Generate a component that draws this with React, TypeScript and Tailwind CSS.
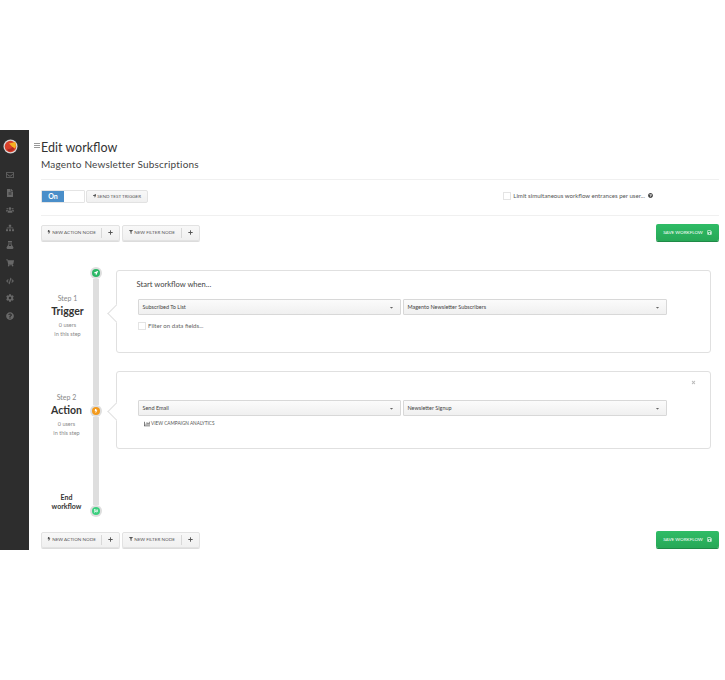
import {
  FaBolt,
  FaCaretDown,
  FaChartBar,
  FaCode,
  FaCog,
  FaFileAlt,
  FaFilter,
  FaFlagCheckered,
  FaFlask,
  FaLocationArrow,
  FaPlus,
  FaQuestionCircle,
  FaRegEnvelope,
  FaSave,
  FaShoppingCart,
  FaSitemap,
  FaTimes,
  FaUsers,
} from "react-icons/fa"
import type { ReactNode } from "react"

const navIcons = [
  FaRegEnvelope,
  FaFileAlt,
  FaUsers,
  FaSitemap,
  FaFlask,
  FaShoppingCart,
  FaCode,
  FaCog,
  FaQuestionCircle,
]

const Logo = () => (
  <svg width="15" height="15" viewBox="0 0 30 30">
    <circle cx="15" cy="15" r="14" fill="#d8d8d8" />
    <circle cx="15" cy="15" r="11.5" fill="#d9412b" />
    <path d="M12 9 L25 6 Q27 14 24 19 Q19 17 12 9Z" fill="#f6b11f" />
    <path d="M8 19 Q14 22 19 16 L23 20 Q17 27 10 24Z" fill="#b52a20" />
  </svg>
)

const Sidebar = () => (
  <div className="w-[29px] bg-[#2d2d2d] shrink-0 flex flex-col items-center pt-[9px] pr-[9px]">
    <Logo />
    <div className="mt-[17px] flex flex-col items-center gap-[9.6px]">
      {navIcons.map((Icon, i) => (
        <Icon key={i} className="size-[8px] text-[#686868]" />
      ))}
    </div>
  </div>
)

const NodeButton = ({ icon, label, width }: { icon: ReactNode; label: string; width: string }) => (
  <div className={`${width} h-[16px] flex items-center rounded-[2px] border border-[#e2e2e2] bg-gradient-to-b from-[#f8f8f8] to-[#f0f0f0] shadow-[0_1px_0_#dcdcdc]`}>
    <div className="flex-1 flex items-center justify-center gap-[1px] text-[4.6px] text-[#555] whitespace-nowrap">
      {icon}
      {label}
    </div>
    <div className="w-[18px] h-[10px] border-l border-[#d8d8d8] flex items-center justify-center">
      <FaPlus className="size-[5px] text-[#555]" />
    </div>
  </div>
)

const ButtonBar = () => (
  <div className="flex items-center">
    <div className="flex gap-[2px]">
      <NodeButton width="w-[79px]" icon={<FaBolt className="size-[4px]" />} label="NEW ACTION NODE" />
      <NodeButton width="w-[78px]" icon={<FaFilter className="size-[4px]" />} label="NEW FILTER NODE" />
    </div>
    <div className="ml-auto w-[63px] h-[17px] rounded-[2px] bg-gradient-to-b from-[#2fbc66] to-[#27a857] shadow-[0_1px_0_#1f8a47] flex items-center justify-center gap-[4px] text-[4.6px] text-white whitespace-nowrap">
      SAVE WORKFLOW
      <FaSave className="size-[5px] opacity-80" />
    </div>
  </div>
)

const Select = ({ value, width }: { value: string; width: string }) => (
  <div className={`${width} h-[16px] px-[3.5px] flex items-center rounded-[1px] border border-[#d8d8d8] bg-gradient-to-b from-[#fbfbfb] to-[#f0f0f0] text-[5.5px] text-[#444]`}>
    {value}
    <FaCaretDown className="ml-auto mr-[3px] size-[5px] text-[#666]" />
  </div>
)

const Checkbox = () => <div className="size-[8px] border border-[#e4e4e4] bg-white shrink-0" />

const Card = ({ height, notchTop, children }: { height: string; notchTop: string; children: ReactNode }) => (
  <div className={`relative ${height} shrink-0 rounded-[3px] border border-[#e0e0e0] bg-white`}>
    <div className={`absolute left-[-7px] ${notchTop} size-[13px] rotate-45 border-l border-b border-[#e0e0e0] bg-white`} />
    {children}
  </div>
)

const StepLabel = ({ step, title, className }: { step: string; title: string; className: string }) => (
  <div className={`${className} flex flex-col items-center text-center`}>
    <div className="text-[7px] leading-[9px] text-[#888]">{step}</div>
    <div className="mt-[2px] text-[10.5px] leading-[13px] font-bold text-[#333]">{title}</div>
    <div className="mt-[3px] text-[5.5px] leading-[9px] text-[#888]">0 users</div>
    <div className="text-[5.5px] leading-[9px] text-[#888]">in this step</div>
  </div>
)

const Node = ({ bg, children }: { bg: string; children: ReactNode }) => (
  <div className="size-[12px] shrink-0 rounded-full bg-[#dedede] flex items-center justify-center">
    <div className={`size-[8px] rounded-full ${bg} flex items-center justify-center text-white`}>{children}</div>
  </div>
)

const Workflow = () => (
  <div className="mt-[26px] flex h-[250px]">
    {/* Labels */}
    <div className="w-[52px] shrink-0 flex flex-col pl-[1px]">
      <StepLabel className="mt-[27px]" step="Step 1" title="Trigger" />
      <StepLabel className="mt-[54px] pr-[2px]" step="Step 2" title="Action" />
      <div className="mt-[55px] pr-[2px] text-center text-[7px] leading-[9px] font-bold text-[#333]">
        End
        <br />
        workflow
      </div>
    </div>

    {/* Rail */}
    <div className="w-[12px] ml-[-3px] shrink-0 flex flex-col items-center">
      <Node bg="bg-[#2bb866]"><FaLocationArrow className="size-[4px]" /></Node>
      <div className="w-[6px] h-[126px] shrink-0 bg-[#dedede]" />
      <Node bg="bg-[#f39a1d]"><FaBolt className="size-[4px]" /></Node>
      <div className="w-[6px] h-[88px] shrink-0 bg-[#dedede]" />
      <Node bg="bg-[#3ccf7f]"><FaFlagCheckered className="size-[4px]" /></Node>
    </div>

    {/* Cards */}
    <div className="ml-[14px] w-[595px] shrink-0 flex flex-col mt-[3px] gap-[18px]">
      <Card height="h-[83px]" notchTop="top-[36px]">
        <div className="pl-[19.5px] pt-[8px] text-[7.6px] leading-[11px] text-[#444]">Start workflow when...</div>
        <div className="relative pl-[21px] mt-[9px] flex gap-[2px]">
          <Select width="w-[263px]" value="Subscribed To List" />
          <Select width="w-[264px]" value="Magento Newsletter Subscribers" />
        </div>
        <div className="pl-[21px] mt-[6px] flex items-center gap-[2px] text-[6.1px] text-[#666]">
          <Checkbox />
          Filter on data fields...
        </div>
      </Card>
      <Card height="h-[78px]" notchTop="top-[33px]">
        <div className="flex justify-end pr-[14px] pt-[8px] h-[28px]">
          <FaTimes className="size-[5px] text-[#bbb]" />
        </div>
        <div className="relative pl-[21px] flex gap-[2px]">
          <Select width="w-[263px]" value="Send Email" />
          <Select width="w-[264px]" value="Newsletter Signup" />
        </div>
        <div className="pl-[27px] mt-[4px] flex items-center gap-[1px] text-[4.7px] text-[#555] whitespace-nowrap">
          <FaChartBar className="size-[6px]" />
          VIEW CAMPAIGN ANALYTICS
        </div>
      </Card>
    </div>
  </div>
)

const App = () => (
  <div className="h-[680px] w-[725px] bg-white flex items-center overflow-hidden" style={{ fontFamily: "Lato, sans-serif" }}>
    <div className="h-[420px] w-full flex">
      <Sidebar />
      <div className="flex-1 relative pl-[12px] pr-[6px]">
        {/* Hamburger */}
        <div className="absolute left-[5px] top-[13px] w-[6px] flex flex-col gap-[1px]">
          <div className="h-px bg-[#999]" />
          <div className="h-px bg-[#999]" />
          <div className="h-px bg-[#999]" />
        </div>

        {/* Header */}
        <div className="pt-[9px] text-[12.5px] leading-[17px] text-[#333]">Edit workflow</div>
        <div className="mt-[1px] text-[10px] leading-[14px] text-[#444] tracking-[0.2px]">Magento Newsletter Subscriptions</div>
        <div className="mt-[8px] h-px bg-[#f0f0f0]" />

        {/* Toolbar */}
        <div className="mt-[9px] flex items-center h-[14px]">
          <div className="flex w-[44px] h-[13px] rounded-[1px] border border-[#e4e4e4]">
            <div className="w-[22px] bg-[#4a8ec9] text-white text-[7px] font-bold flex items-center justify-center">On</div>
          </div>
          <div className="ml-[1px] w-[62px] h-[13px] rounded-[2px] border border-[#e2e2e2] bg-gradient-to-b from-[#f8f8f8] to-[#f0f0f0] flex items-center justify-center gap-[1px] text-[4.6px] text-[#555] whitespace-nowrap">
            <FaLocationArrow className="size-[3.5px]" />
            SEND TEST TRIGGER
          </div>
          <div className="ml-auto mr-[66px] flex items-center gap-[2px] text-[6.1px] text-[#555] whitespace-nowrap">
            <Checkbox />
            Limit simultaneous workflow entrances per user...
            <FaQuestionCircle className="ml-[1px] size-[5px] text-[#444]" />
          </div>
        </div>
        <div className="mt-[12px] h-px bg-[#f0f0f0]" />

        <div className="mt-[8px]">
          <ButtonBar />
        </div>
        <Workflow />
        <div className="mt-[14px]">
          <ButtonBar />
        </div>
      </div>
    </div>
  </div>
)

export default App
